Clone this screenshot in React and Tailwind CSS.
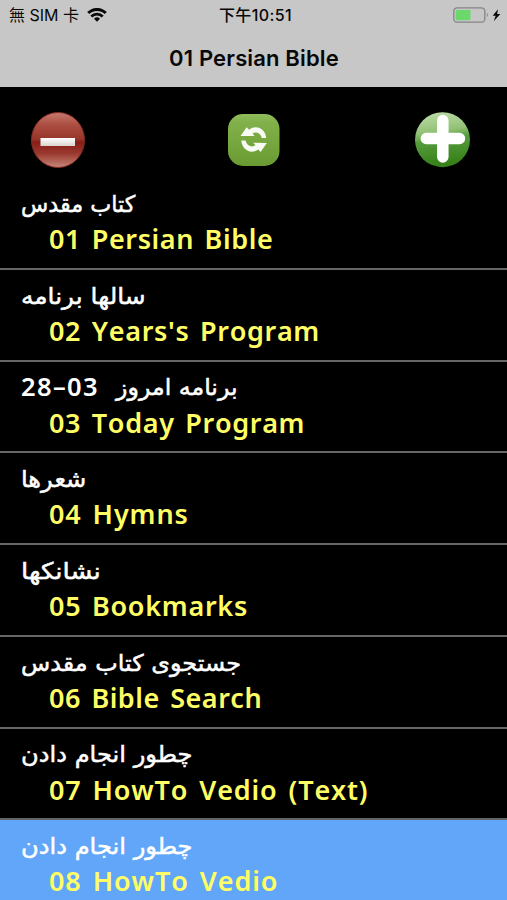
const rows = [
  { fa: "کتاب مقدس", stretch: "scale-x-[0.97]", en: "01 Persian Bible", tracking: "tracking-[0.6px]" },
  { fa: "سالها برنامه", stretch: "scale-x-[1.08]", en: "02 Years's Program", tracking: "tracking-[0.65px]" },
  { fa: "برنامه امروز", stretch: "scale-x-[1.03]", date: "28–03", en: "03 Today Program", tracking: "tracking-[0.65px]" },
  { fa: "شعرها", stretch: "scale-x-[1.05]", en: "04 Hymns", tracking: "tracking-[0.9px]" },
  { fa: "نشانکها", stretch: "scale-x-[1.13]", en: "05 Bookmarks", tracking: "tracking-[0.7px]" },
  { fa: "جستجوی کتاب مقدس", stretch: "scale-x-[1.04]", en: "06 Bible Search", tracking: "tracking-[0.5px]" },
  { fa: "چطور انجام دادن", stretch: "scale-x-[1.05]", en: "07 HowTo Vedio (Text)", tracking: "tracking-[0.87px]" },
  { fa: "چطور انجام دادن", stretch: "scale-x-[1.05]", en: "08 HowTo Vedio", tracking: "tracking-[0.92px]", selected: true },
];

const WifiIcon = () => (
  <svg width="20" height="14" viewBox="0 0 20 14" fill="none" stroke="#080808">
    <path d="M1.2 5.1a12.4 12.4 0 0 1 17.6 0" strokeWidth="2.9" />
    <path d="M4.3 8.5a8 8 0 0 1 11.4 0" strokeWidth="2.7" />
    <path d="M10 13.8l-3-3.1a4.3 4.3 0 0 1 6 0z" fill="#080808" stroke="none" />
  </svg>
);

const BatteryIcon = () => (
  <svg width="48" height="18" viewBox="0 0 48 18">
    <rect x="0.8" y="1.8" width="31" height="14.4" rx="3.5" fill="none" stroke="#858585" strokeWidth="1.3" />
    <rect x="2.8" y="4" width="14.7" height="10.2" rx="1.2" fill="#6bd86b" />
    <path d="M33.8 6.8q2.2 2.2 0 4.5z" fill="#858585" />
    <path d="M45 3.2l-5.3 6.5h3l-2 5.5 6.6-7.1h-3.2z" fill="#080808" />
  </svg>
);

const RemoveIcon = () => (
  <svg width="56" height="58" viewBox="0 0 56 58">
    <defs>
      <linearGradient id="red" x1="0" y1="0" x2="0" y2="1">
        <stop offset="0" stopColor="#c47b70" />
        <stop offset="0.22" stopColor="#ad4e42" />
        <stop offset="0.48" stopColor="#97372c" />
        <stop offset="0.54" stopColor="#861d16" />
        <stop offset="0.75" stopColor="#9b3a30" />
        <stop offset="1" stopColor="#c78779" />
      </linearGradient>
      <linearGradient id="bar" x1="0" y1="0" x2="0" y2="1">
        <stop offset="0" stopColor="#fff" />
        <stop offset="1" stopColor="#d9d5ce" />
      </linearGradient>
    </defs>
    <ellipse cx="28" cy="29" rx="26.5" ry="27.5" fill="url(#red)" stroke="#842c23" strokeWidth="1" />
    <rect x="10.5" y="27" width="34.5" height="8" fill="url(#bar)" />
  </svg>
);

const RefreshIcon = () => (
  <svg width="54" height="54" viewBox="0 0 54 54">
    <defs>
      <linearGradient id="lime" x1="0" y1="0" x2="0" y2="1">
        <stop offset="0" stopColor="#91bd5d" />
        <stop offset="0.15" stopColor="#82b14b" />
        <stop offset="1" stopColor="#6a9b32" />
      </linearGradient>
    </defs>
    <rect x="1" y="1" width="51.5" height="52" rx="15" fill="url(#lime)" />
    <path d="M13.5 23L19.6 14.3l2.5 2.4c7.7-5.6 16.4-.5 17.1 8.3h-4.5c-.8-4.8-5.3-7-9.2-4.7l2 2.7z" fill="#f8faf4" />
    <path d="M14.3 27.6h4.3c.8 4.8 5.7 7.4 9.9 4.7l-2.3-2.6 13.6.3-6.2 9-2.3-2.4C23.5 41.8 15 36.9 14.3 27.6z" fill="#f8faf4" />
  </svg>
);

const AddIcon = () => (
  <svg width="58" height="58" viewBox="0 0 58 58">
    <defs>
      <linearGradient id="green" x1="0" y1="0" x2="0.15" y2="1">
        <stop offset="0" stopColor="#c2deae" />
        <stop offset="0.4" stopColor="#91c174" />
        <stop offset="0.55" stopColor="#569c3c" />
        <stop offset="1" stopColor="#368119" />
      </linearGradient>
    </defs>
    <ellipse cx="28.5" cy="28.7" rx="27.5" ry="27.5" fill="url(#green)" />
    <path d="M28.8 9.5v36.5M12.3 27.5h33.2" stroke="#fff" strokeWidth="11.5" strokeLinecap="round" />
  </svg>
);

const Row = ({ fa, stretch, date, en, tracking, selected }) => (
  <li
    className={`h-[91.75px] shrink-0 border-b-2 pl-[21px] ${
      selected ? "bg-[#61a6f8] border-[#61a6f8]" : "bg-black border-[#666]"
    }`}
  >
    <p className="flex h-[46px] items-center gap-[17px] pt-[6px] whitespace-nowrap text-[23px] text-white">
      {date && (
        <span className="-translate-y-px font-['Noto_Sans',sans-serif] text-[25.5px] font-semibold tracking-[1.4px] [font-kerning:none]">
          {date}
        </span>
      )}
      <span dir="rtl" className={`origin-left font-['DejaVu_Sans',sans-serif] [-webkit-text-stroke:0.5px_#fff] ${stretch}`}>
        {fa}
      </span>
    </p>
    <p
      className={`pl-[28px] font-['Noto_Sans',sans-serif] text-[27px] leading-[30px] font-semibold whitespace-nowrap text-[#ffff65] [font-kerning:none] [word-spacing:3px] ${tracking}`}
    >
      {en}
    </p>
  </li>
);

export default function App() {
  return (
    <div className="flex h-[900px] w-[507px] flex-col overflow-hidden bg-black">
      <header className="h-[87px] shrink-0 bg-[#c7c7c7] font-['Inter','Noto_Sans_CJK_TC',sans-serif] text-[#080808]">
        <div className="grid h-[30px] grid-cols-3 items-center text-[16px]">
          <div className="flex items-center gap-2 pl-[9px] whitespace-nowrap">
            <span>無 SIM 卡</span>
            <WifiIcon />
          </div>
          <span className="pl-1 text-center font-medium tracking-[0.4px]">下午10:51</span>
          <div className="flex justify-end pr-[6px]">
            <BatteryIcon />
          </div>
        </div>
        <h1 className="pt-[13px] pl-px text-center text-[22px] leading-[30px] font-semibold tracking-[0.15px]">01 Persian Bible</h1>
      </header>
      <div className="flex h-[91px] shrink-0 items-center pt-[14px] pl-[30px]">
        <RemoveIcon />
        <div className="pr-[133px] pl-[141px]">
          <RefreshIcon />
        </div>
        <AddIcon />
      </div>
      <ul className="flex flex-col">
        {rows.map((row) => (
          <Row key={row.en} {...row} />
        ))}
      </ul>
    </div>
  );
}
